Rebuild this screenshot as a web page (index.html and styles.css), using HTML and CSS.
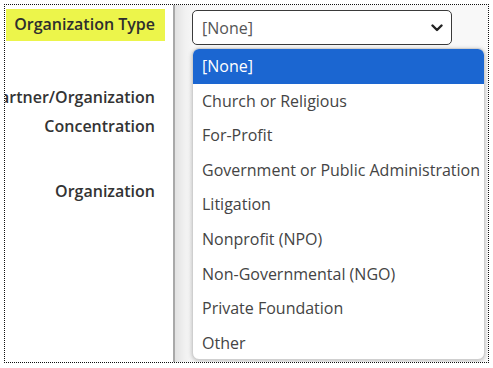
FILE: index.html
```html
<!DOCTYPE html>
<html>
<head>
<meta charset="utf-8">
<link rel="stylesheet" href="styles.css">
</head>
<body>
<div class="frame">
  <div class="labels">
    <div class="label-row first"><span class="hl">Organization Type</span></div>
    <div class="label-row two">Partner/Organization<br>Concentration</div>
    <div class="label-row third">Organization</div>
  </div>
  <div class="panel">
    <div class="select">
      <span class="sel-text">[None]</span>
      <svg class="chev" width="12" height="8" viewBox="0 0 12 8"><path d="M1.5 1.5 L6 6 L10.5 1.5" fill="none" stroke="#222" stroke-width="2.4" stroke-linecap="round" stroke-linejoin="round"/></svg>
    </div>
    <ul class="menu">
      <li class="opt active">[None]</li>
      <li class="opt">Church or Religious</li>
      <li class="opt">For-Profit</li>
      <li class="opt">Government or Public Administration</li>
      <li class="opt">Litigation</li>
      <li class="opt">Nonprofit (NPO)</li>
      <li class="opt">Non-Governmental (NGO)</li>
      <li class="opt">Private Foundation</li>
      <li class="opt">Other</li>
    </ul>
  </div>
</div>
</body>
</html>
```
FILE: styles.css
```css
html, body {
  margin: 0;
  padding: 0;
  background: #ffffff;
}
body {
  font-family: "Open Sans", Arial, sans-serif;
}
.frame {
  margin: 4px 0 0 4px;
  width: 485px;
  height: 359px;
  box-sizing: border-box;
  border: 1px dotted #111;
  display: flex;
  overflow: hidden;
  background: #fff;
}
.labels {
  width: 168px;
  flex: none;
  display: flex;
  flex-direction: column;
  align-items: flex-end;
  font-weight: 600;
  font-size: 16px;
  color: #333;
  white-space: nowrap;
}
.label-row {
  text-align: right;
  padding-right: 18px;
}
.first {
  padding: 0;
  margin-top: 4px;
  margin-right: 8px;
}
.hl {
  display: block;
  background: #ecf54b;
  padding: 6px 10px 7px 8px;
  line-height: 19px;
  color: #2e2e2e;
}
.two {
  margin-top: 42px;
  line-height: 29px;
}
.third {
  margin-top: 40px;
  line-height: 20px;
}
.panel {
  flex: 1;
  position: relative;
  border-left: 2px solid #a9a9a9;
  background: linear-gradient(to right, #e2e2e2 0px, #f1f1f1 10px, #f8f8f8 20px, #f8f8f8 100%);
  padding: 5px 0 0 17px;
}
.select {
  width: 260px;
  height: 35px;
  box-sizing: border-box;
  border: 1px solid #3a3a3a;
  border-radius: 5px;
  background: #fff;
  display: flex;
  align-items: center;
  justify-content: space-between;
  padding: 0 8px 0 9px;
}
.sel-text {
  font-size: 16px;
  color: #555;
}
.chev {
  display: block;
}
.menu {
  position: absolute;
  top: 43px;
  left: 17px;
  width: 293px;
  height: 312px;
  margin: 0;
  padding: 0;
  list-style: none;
  background: #fff;
  border: 1px solid #cfcfcf;
  box-sizing: border-box;
  border-radius: 7px;
  box-shadow: 0 1px 4px rgba(0,0,0,0.25);
  overflow: hidden;
}
.opt {
  height: 34.6px;
  line-height: 34.6px;
  padding-left: 9px;
  font-size: 16px;
  color: #444;
  white-space: nowrap;
}
.opt.active {
  background: #1b66d1;
  color: #fff;
}
```
